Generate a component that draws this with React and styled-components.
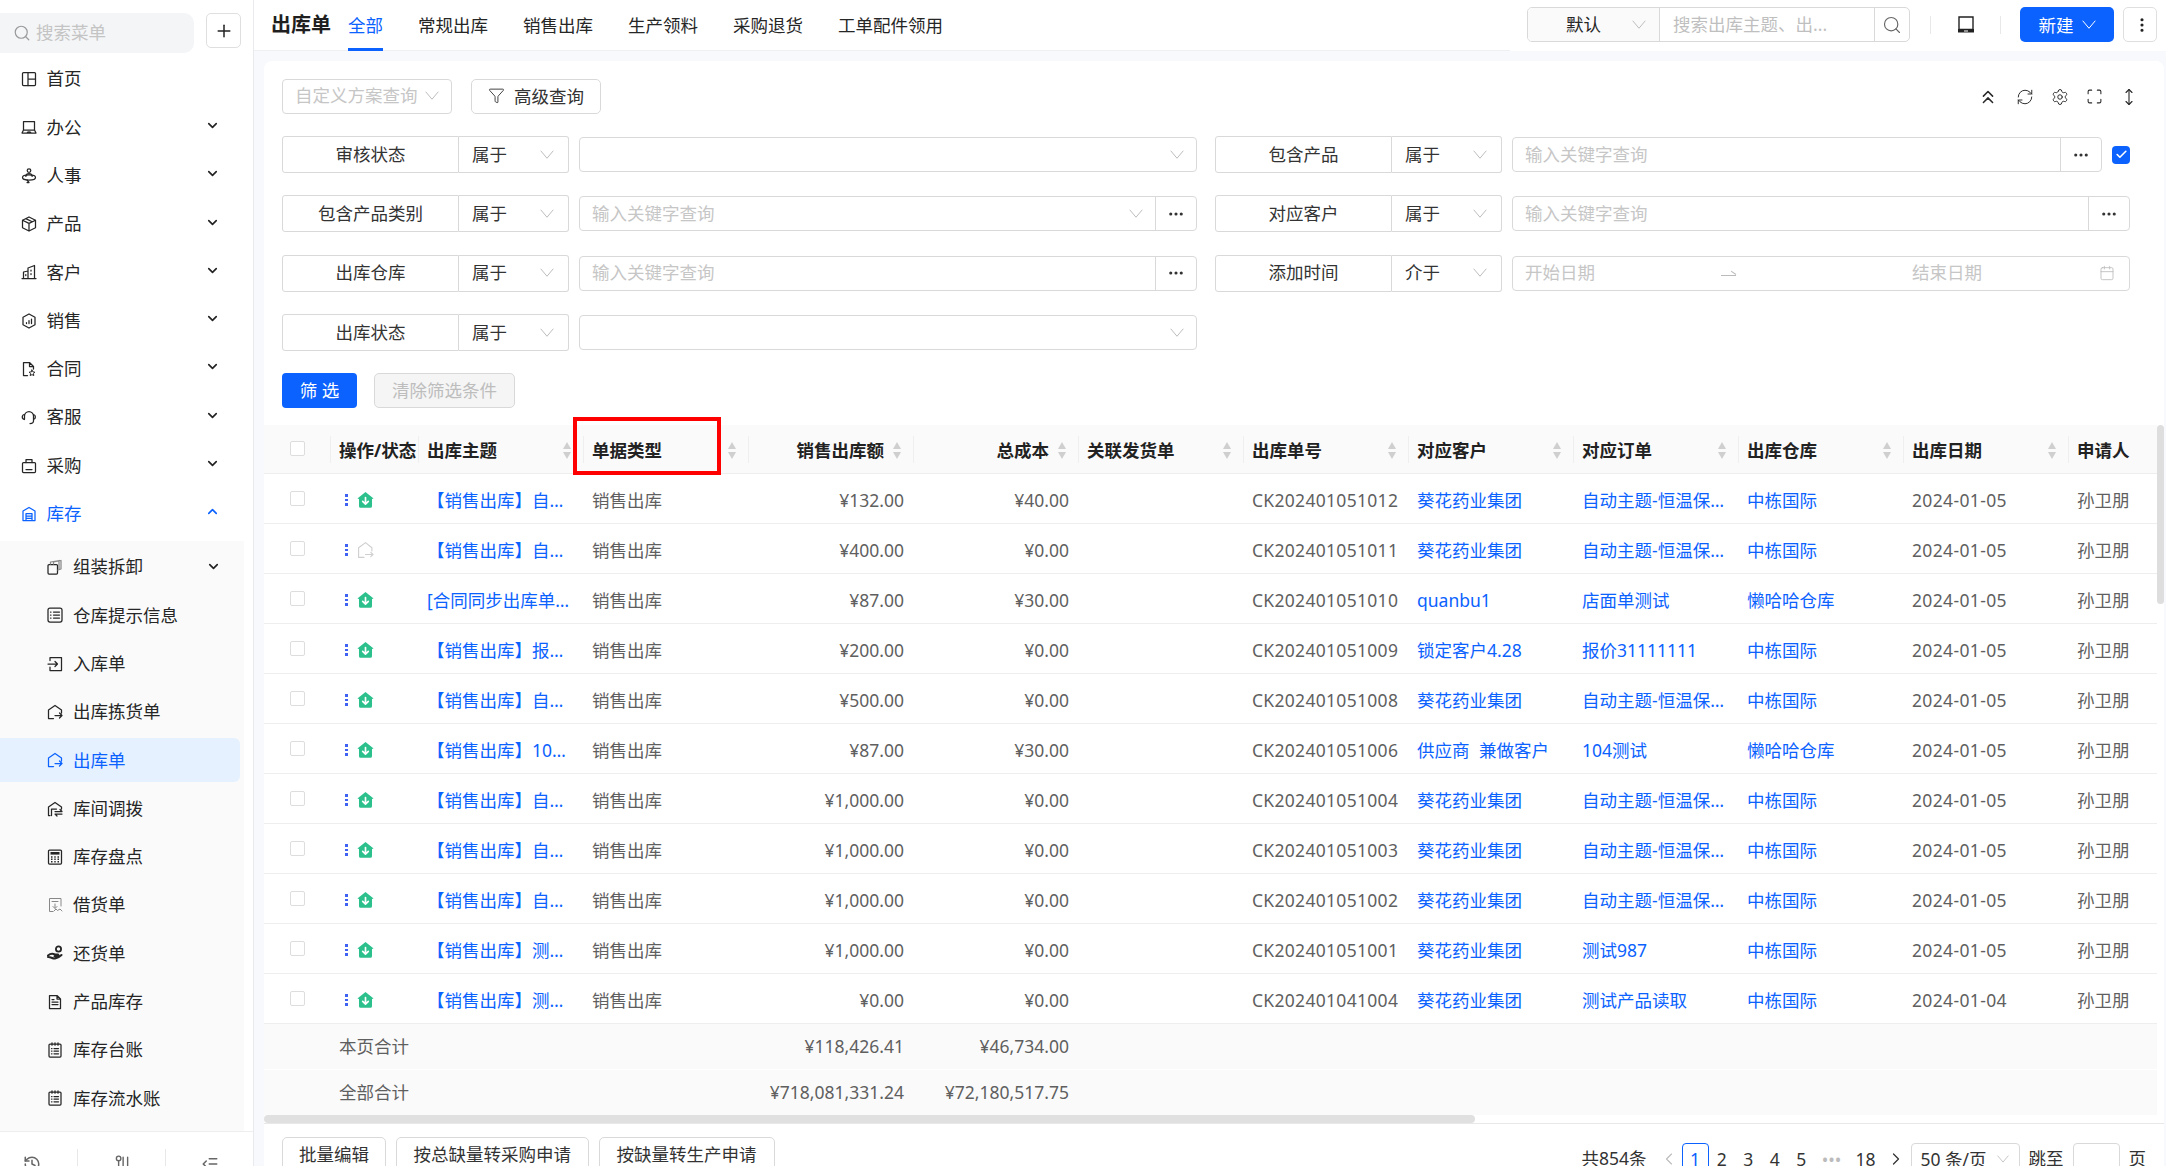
import React from 'react';
import styled, { createGlobalStyle } from 'styled-components';
import { ChevronDown, ChevronUp, Plus, Search, Funnel, ChevronsUp, RefreshCw, Settings, Maximize, MoveVertical, Ellipsis, EllipsisVertical, Check, Calendar, ChevronLeft, ChevronRight, History, IndentDecrease } from 'lucide-react';

const BLUE = '#0b62ff';
const GlobalStyle = createGlobalStyle`
  html, body { margin: 0; padding: 0; height: 100%; background: #fff; }
  body { font-family: "Noto Sans", "Noto Sans CJK SC", sans-serif; font-size: 17.5px; color: #262626; overflow: hidden; }
  * { box-sizing: border-box; }
`;

const Page = styled.div`display: flex; width: 2166px; height: 1166px; overflow: hidden;`;
const Sidebar = styled.aside`width: 254px; flex: none; height: 100%; display: flex; flex-direction: column; background: #fff; border-right: 1px solid #e8eaee;`;
const SearchRow = styled.div`display: flex; height: 55px; padding-top: 13px; flex: none;`;
const MenuSearch = styled.div`width: 194px; height: 40px; background: #f4f5f7; border-radius: 0 10px 10px 0; display: flex; align-items: center; gap: 5px; padding-left: 13px; color: #c4c4c4; line-height: 1;`;
const AddButton = styled.button`width: 35px; height: 35px; margin-left: 12px; padding: 0; background: #fff; border: 1px solid #dfdfdf; border-radius: 5px; display: flex; align-items: center; justify-content: center; color: #222;`;
const Menu = styled.nav`flex: 1; overflow: hidden;`;
const MenuItem = styled.div`height: 48.3px; display: flex; align-items: center; padding: 0 33px 0 21px; gap: 9.5px; line-height: 1; color: ${p => p.$active ? BLUE : '#262626'}; svg.arrow { margin-left: auto; margin-top: -4px; color: ${p => p.$active ? BLUE : '#222'}; }`;
const SubMenu = styled.div`width: 244px; margin-top: 3px; padding: 2px 0 9px; background: #fafafa;`;
const SubItem = styled.div`height: ${p => p.$active ? '44px' : '48.3px'}; margin: ${p => p.$active ? '2.15px 4px 2.15px 0' : '0'}; display: flex; align-items: center; padding: 0 23px 0 47px; gap: 10px; line-height: 1; border-radius: ${p => p.$active ? '0 6px 6px 0' : '0'}; background: ${p => p.$active ? '#e5f1ff' : 'transparent'}; color: ${p => p.$active ? BLUE : '#262626'}; svg.arrow { margin-left: auto; color: #222; margin-top: -2px; }`;
const SideFoot = styled.div`flex: none; height: 35px; border-top: 1px solid #eee; display: grid; grid-template-columns: 77px 88px 1fr; padding-top: 17px; color: #666; overflow: hidden;`;
const SideFootCell = styled.div`display: flex; justify-content: center; height: 40px; border-left: ${p => p.$line ? '1px solid #e8e8e8' : 'none'}; padding: 6px ${p => p.$shift || 0}px 0 0;`;

const Main = styled.main`flex: 1; min-width: 0; height: 100%; display: flex; flex-direction: column; background: #f7f9fc; overflow: hidden;`;
const TopBar = styled.header`flex: none; height: 51px; display: flex; background: #fff;`;
const TabsArea = styled.div`flex: 1; display: flex; align-items: flex-start; padding-left: 17px; border-bottom: 1px solid #eef0f3; background: #fff; height: 51px;`;
const Title = styled.h1`margin: 0 17px 0 0; font-size: 20px; font-weight: 700; color: #1f1f1f; line-height: 50px; width: 60px; white-space: nowrap;`;
const Tabs = styled.div`display: flex; gap: 35px;`;
const Tab = styled.div`height: 51px; line-height: 50px; white-space: nowrap; color: ${p => p.$active ? BLUE : '#262626'}; border-bottom: ${p => p.$active ? `3px solid ${BLUE}` : 'none'};`;
const Tools = styled.div`flex: none; display: flex; align-items: flex-start; margin-left: 17px; padding: 7px 9px 0 0; height: 51px; background: #fff;`;
const SearchGroup = styled.div`display: flex; width: 383px; height: 35px; border: 1px solid #d9d9d9; border-radius: 5px; overflow: hidden; line-height: 33px;`;
const GroupSelect = styled.div`width: 132px; flex: none; background: #fafafa; border-right: 1px solid #d9d9d9; display: flex; align-items: center; padding: 0 13px 0 38px; justify-content: space-between; color: #262626;`;
const GroupPlaceholder = styled.div`flex: 1; padding-left: 13px; color: #bfbfbf; white-space: nowrap; overflow: hidden; text-overflow: ellipsis;`;
const GroupButton = styled.div`width: 35px; flex: none; border-left: 1px solid #d9d9d9; display: flex; align-items: center; justify-content: center; color: #666;`;
const ToolDivider = styled.div`width: 1px; height: 18px; margin-top: 9px; background: #e8e8e8; margin-left: ${p => p.$ml || 0}px;`;
const IconSlot = styled.div`width: 69px; height: 35px; display: flex; align-items: center; justify-content: center; color: #222;`;
const NewButton = styled.button`width: 94px; height: 35px; margin-left: 19px; background: ${BLUE}; color: #fff; border: 0; border-radius: 5px; font: inherit; display: flex; align-items: center; justify-content: center; gap: 8px; padding: 0;`;
const MoreButton = styled.button`width: 34px; height: 35px; margin-left: 9px; background: #fff; border: 1px solid #dfdfdf; border-radius: 5px; display: flex; align-items: center; justify-content: center; padding: 0 0 0 4px; color: #222;`;

const Card = styled.section`flex: 1; margin: 10px 2px 0 10px; background: #fff; border-radius: 8px 8px 0 0; padding-top: 18px; overflow: hidden; display: flex; flex-direction: column;`;
const QueryBar = styled.div`display: flex; align-items: center; height: 35px; padding: 0 26px 0 18px; gap: 19px; flex: none;`;
const SchemeSelect = styled.div`width: 170px; height: 35px; border: 1px solid #d9d9d9; border-radius: 4px; display: flex; align-items: center; justify-content: space-between; padding: 0 12px 2px 12px; color: #c6c6c6; line-height: 1; white-space: nowrap;`;
const OutlineButton = styled.button`height: 35px; padding: 0 ${p => p.$pad || 16}px 2px; background: #fff; border: 1px solid #d9d9d9; border-radius: 5px; font: inherit; color: #333; display: flex; align-items: center; gap: 9px; white-space: nowrap; flex: none;`;
const CardIcons = styled.div`margin-left: auto; display: flex; align-items: center; gap: 17px; color: #2a2a2a;`;
const FilterGrid = styled.div`display: grid; grid-template-columns: 915px 915px; column-gap: 18px; row-gap: 22.25px; padding: 22px 34px 0 18px; grid-auto-rows: 37px; flex: none;`;
const FilterRow = styled.div`display: flex; align-items: center; height: 37px;`;
const FilterLabel = styled.div`width: 177px; height: 37px; flex: none; border: 1px solid #d9d9d9; border-radius: 3px 0 0 3px; display: flex; align-items: center; justify-content: center; color: #333; line-height: 1;`;
const OpSelect = styled.div`width: 110px; height: 37px; flex: none; border: 1px solid #d9d9d9; border-left: 0; border-radius: 0 3px 3px 0; display: flex; align-items: center; justify-content: space-between; padding: 0 14px 0 13px; color: #333; line-height: 1;`;
const ValueBox = styled.div`flex: 1; min-width: 0; height: 35px; margin-left: 10px; border: 1px solid #d9d9d9; border-radius: 4px; display: flex; align-items: center; color: #c6c6c6; line-height: 1; overflow: hidden;`;
const ValueText = styled.div`flex: 1; padding: 0 12px; white-space: nowrap; display: flex; align-items: center; justify-content: space-between;`;
const DotsCell = styled.div`width: 41px; height: 100%; flex: none; border-left: 1px solid #d9d9d9; display: flex; align-items: center; justify-content: center; color: #333;`;
const Tick = styled.div`width: 18px; height: 18px; flex: none; margin-left: 10px; border-radius: 4px; background: ${BLUE}; color: #fff; display: flex; align-items: center; justify-content: center;`;
const DateStart = styled.div`width: 208px; padding-left: 12px;`;
const DateArrow = styled.div`width: 15px; height: 6px; border-bottom: 1px solid #bbb; position: relative; &::after { content: ''; position: absolute; right: 0; bottom: 0; width: 6px; border-top: 1px solid #bbb; transform: rotate(35deg); transform-origin: right; }`;
const DateEnd = styled.div`flex: 1; padding: 0 14px 0 176px; display: flex; justify-content: space-between; align-items: center;`;
const FilterActions = styled.div`display: flex; gap: 17px; padding: 22px 0 0 18px; flex: none;`;
const PrimaryButton = styled.button`width: 75px; height: 35px; background: ${BLUE}; border: 0; border-radius: 4px; color: #fff; font: inherit; padding: 0 0 2px;`;
const DisabledButton = styled.button`width: 141px; height: 35px; background: #f5f5f5; border: 1px solid #d9d9d9; border-radius: 5px; color: #bdbdbd; font: inherit; padding: 0 0 2px;`;

const TableArea = styled.div`display: flex; margin-top: 17px; flex: none;`;
const Table = styled.div`width: 1893px; flex: none;`;
const VScroll = styled.div`width: 7px; flex: none;`;
const VThumb = styled.div`height: 179px; background: #dedede; border-radius: 4px;`;
const GRID = '66px 88px repeat(10, 165px) 89px';
const HeadRow = styled.div`display: grid; grid-template-columns: ${GRID}; height: 49px; background: #fafafa; border-bottom: 1px solid #eee;`;
const HeadCell = styled.div`position: relative; display: flex; align-items: center; justify-content: ${p => p.$right ? 'flex-end' : 'flex-start'}; padding: 4px ${p => p.$right ? '29px' : '9px'} 0 9px; font-weight: 700; color: #222; white-space: nowrap; line-height: 1; &::before { content: ''; display: ${p => p.$noline ? 'none' : 'block'}; position: absolute; left: 0; top: 11px; height: 27px; width: 1px; background: #efefef; }`;
const Sorter = styled.span`position: absolute; right: 12px; top: 17px; display: flex; flex-direction: column; gap: 3px; &::before, &::after { content: ''; width: 0; height: 0; border-left: 4px solid transparent; border-right: 4px solid transparent; } &::before { border-bottom: 7px solid #cfcfcf; } &::after { border-top: 7px solid #cfcfcf; }`;
const Highlight = styled.div`position: absolute; left: -10px; top: -8px; width: 148px; height: 58px; border: 4px solid #f00; pointer-events: none;`;
const Row = styled.div`display: grid; grid-template-columns: ${GRID}; height: 50px; border-bottom: 1px solid #eee; background: #fff;`;
const Cell = styled.div`display: flex; align-items: center; justify-content: ${p => p.$right ? 'flex-end' : 'flex-start'}; padding: 5px 9px 0 9px; min-width: 0; color: ${p => p.$link ? BLUE : '#5f5f5f'}; line-height: 1.3; letter-spacing: ${p => p.$ls || 0}px;`;
const Clip = styled.span`display: block; white-space: nowrap; overflow: hidden; text-overflow: ellipsis; min-width: 0; word-spacing: 5px;`;
const CheckCell = styled.div`display: flex; align-items: center; padding-left: 26px;`;
const Box = styled.span`display: block; width: 15px; height: 15px; border: 1px solid #ddd; border-radius: 2px; background: #fff;`;
const StatusCell = styled.div`display: flex; align-items: center; padding: 3px 0 0 15px; gap: 9px;`;
const ActionDots = styled.span`display: flex; flex-direction: column; gap: 2px; span { display: block; width: 2.5px; height: 2.5px; background: #3f62f2; }`;
const SumRow = styled.div`display: grid; grid-template-columns: ${GRID}; height: 45px; background: #fafafa; margin-bottom: ${p => p.$gap ? '1px' : '0'};`;
const SumText = styled.div`display: flex; align-items: center; justify-content: ${p => p.$right ? 'flex-end' : 'flex-start'}; padding: 0 9px; color: #5f5f5f; white-space: nowrap; grid-column: ${p => p.$col}; line-height: 1;`;
const HScroll = styled.div`height: 9px; width: 1900px; border-bottom: 1px solid #e8e8e8; flex: none;`;
const HThumb = styled.div`width: 1211px; height: 8px; background: #e0e0e0; border-radius: 4px;`;
const Footer = styled.div`flex: none; display: flex; justify-content: space-between; padding: 13px 9px 0 18px;`;
const BatchGroup = styled.div`display: flex; gap: 10px;`;
const Pager = styled.div`display: flex; align-items: flex-start; padding-top: 6px; line-height: 30px; height: 40px; color: #333;`;
const PagerTotal = styled.span`margin-right: 9px; white-space: nowrap;`;
const PageItem = styled.span`width: ${p => p.$w || 26.5}px; height: 32px; flex: none; display: flex; align-items: center; justify-content: center; color: ${p => p.$active ? BLUE : p.$muted ? '#bbb' : '#333'}; border: ${p => p.$active ? `1px solid ${BLUE}` : '0'}; border-radius: 4px; background: #fff;`;
const SizeSelect = styled.div`width: 109px; height: 32px; margin-left: 2px; border: 1px solid #d9d9d9; border-radius: 4px; display: flex; align-items: center; justify-content: space-between; padding: 0 10px 0 9px; white-space: nowrap;`;
const JumpLabel = styled.span`margin: 0 9px; white-space: nowrap;`;
const JumpInput = styled.div`width: 47px; height: 32px; border: 1px solid #d9d9d9; border-radius: 4px; flex: none;`;

const Ico = ({ children, size = 16, color }) => (
  <svg width={size} height={size} viewBox="0 0 16 16" fill="none" stroke={color || 'currentColor'} strokeWidth="1.25" strokeLinecap="round" strokeLinejoin="round" style={{ flex: 'none' }}>{children}</svg>
);
const icons = {
  home: <Ico><rect x="1.5" y="1.5" width="13" height="13" rx="1" /><path d="M7 1.5v13M7 8h7.5" /></Ico>,
  office: <Ico><path d="M2.5 11V2.5h11V11M2.5 11h11M2.5 11 1 14h14l-1.5-3M6 14c0-1.5 4-1.5 4 0" /></Ico>,
  person: <Ico><circle cx="8" cy="2.6" r="1.8" /><ellipse cx="8" cy="9.5" rx="6.5" ry="2.6" /><path d="M4.8 8.4C5 6.2 6 5.6 8 5.6s3 .6 3.2 2.8M6 12l2 2.5M6 14.5h2" /></Ico>,
  box: <Ico><path d="M8 1 14.5 4.2v7.6L8 15 1.5 11.8V4.2zM1.5 4.2 8 7.4l6.5-3.2M8 7.4V15M4.8 2.6l6.4 3.2" /></Ico>,
  customer: <Ico><path d="M1 14.5h14M7 14.5V4l6.5-2.5v13M2.5 14.5V8L7 7M10 6v1M10 9.5v1M4.8 10.5v1" /></Ico>,
  sales: <Ico><path d="M8 1 14 4.2v7.6L8 15 2 11.8V4.2z" /><path d="M5.5 10.5V9.5M8 10.5V7.5M10.5 10.5V6" /></Ico>,
  contract: <Ico><path d="M6.5 14.5H2.5v-13h6l4 4V8M8.5 1.5v4h4" /><path d="m11 9 .9 1.9 2 .3-1.45 1.4.35 2-1.8-1-1.8 1 .35-2L8.1 11.2l2-.3z" strokeWidth="1" /></Ico>,
  service: <Ico><path d="M3.5 10V7a4.5 4.5 0 0 1 9 0v5c0 1.5-1.5 2.5-3.5 2.5M3.5 5.5c-3 .5-3 4.5 0 5M12.5 5.5c2.5.5 2.5 4.5 0 5" /></Ico>,
  bag: <Ico><rect x="1.5" y="4.5" width="13" height="10" rx="1" /><path d="M5 4.5V1.5h6v3M5 11.5h6" /></Ico>,
  stock: <Ico><path d="M2 5 8 1.5 14 5v9.5H2zM5 14.5V7.5h6v7M5 10h6M5 12.3h6" /></Ico>,
  layers: <Ico><rect x="1" y="5.5" width="9.5" height="9.5" rx="1" /><path d="M3.5 5V3l9-1.5M6.5 5V3l7.5-1.5V10l-3 1M12 2v8.5" stroke="#8a8a8a" /></Ico>,
  list: <Ico><rect x="1" y="1" width="14" height="14" rx="2" /><path d="M6.5 5h6M6.5 8h6M6.5 11h6M3.5 5h.5M3.5 8h.5M3.5 11h.5" /></Ico>,
  inbox: <Ico><path d="M3 4.5V1.5h11.5v13H3V11" /><path d="M1 8h9.5M8 5.5 10.5 8 8 10.5" /></Ico>,
  outbox: <Ico><path d="M6.5 14.5H1.5V6L8 1.5 14.5 6v3M8 11.5h7M12.5 9l2.5 2.5-2.5 2.5" /></Ico>,
  transfer: <Ico><path d="M3 14.5H1.5V6L8 1.5 14.5 6v2M4.5 14.5V8h5M8 10.5h7l-2-2M15 13H8l2 2" /></Ico>,
  calc: <Ico><rect x="1.5" y="1" width="13" height="14" rx="1" /><rect x="3.5" y="3" width="9" height="2.6" fill="currentColor" stroke="none" /><path d="M4 8h1.5M7.3 8h1.4M10.5 8H12M4 10.3h1.5M7.3 10.3h1.4M10.5 10.3H12M4 12.8h1.5M7.3 12.8h1.4M10.5 12.8H12" strokeWidth="1.6" strokeLinecap="butt" /></Ico>,
  borrow: <Ico color="#888"><path d="M14 9V1.5H2.5v13H6M5 4.5h6M8 7v4M6 9.5l2 2 2-2M7 14l2-2 1.5 1.5L13 12l2 2" strokeWidth="1" /></Ico>,
  hand: <Ico><circle cx="11.5" cy="4" r="2.6" fill="none" strokeWidth="1.8" /><path d="M1 10.5c3-2.5 5-2 7-1h3c1 1 0 1.8-1 1.8H7.5M1 12c2-.5 5 2 7 1.5s5-2 6.5-3.5" strokeWidth="2" /></Ico>,
  doc: <Ico><path d="M10 1.5H2.5v13h11V5zM10 1.5V5h3.5M5 8h6M5 10.5h6M5 5.5h2" /></Ico>,
  ledger: <Ico><rect x="2" y="2" width="12" height="13" rx="1" /><path d="M5 .8v2.4M8 .8v2.4M11 .8v2.4M7 6.5h4.5M7 9h4.5M7 11.8h4.5M4.5 6.5h.5M4.5 9h.5M4.5 11.8h.5" /></Ico>,
};

const Arrow = ({ size = 15 }) => <ChevronDown className="arrow" size={size} strokeWidth={2.6} />;
const Caret = ({ color = '#bdbdbd', width = 14 }) => (
  <svg width={width} height={width * 0.65} viewBox="0 0 14 9" fill="none" stroke={color} strokeWidth="1" style={{ flex: 'none' }}><path d="M.7.7 7 8.2 13.3.7" /></svg>
);

const mainMenu = [
  ['home', '首页', false], ['office', '办公', true], ['person', '人事', true], ['box', '产品', true], ['customer', '客户', true],
  ['sales', '销售', true], ['contract', '合同', true], ['service', '客服', true], ['bag', '采购', true],
];
const subMenu = [
  ['layers', '组装拆卸', true], ['list', '仓库提示信息'], ['inbox', '入库单'], ['outbox', '出库拣货单'], ['outbox', '出库单', false, true],
  ['transfer', '库间调拨'], ['calc', '库存盘点'], ['borrow', '借货单'], ['hand', '还货单'], ['doc', '产品库存'], ['ledger', '库存台账'], ['ledger', '库存流水账'],
];

const FULL = '葵花药业集团';
const AUTO = '自动主题-恒温保温杯订单';
const ZD = '中栋国际';
const LH = '懒哈哈仓库';
const rows = [
  ['【销售出库】自动主题出库', '¥132.00', '¥40.00', 'CK202401051012', FULL, AUTO, ZD, '2024-01-05', true],
  ['【销售出库】自动主题出库', '¥400.00', '¥0.00', 'CK202401051011', FULL, AUTO, ZD, '2024-01-05', false],
  ['[合同同步出库单]店面单测试', '¥87.00', '¥30.00', 'CK202401051010', 'quanbu1', '店面单测试', LH, '2024-01-05', true],
  ['【销售出库】报价31111111', '¥200.00', '¥0.00', 'CK202401051009', '锁定客户4.28', '报价31111111', ZD, '2024-01-05', true],
  ['【销售出库】自动主题出库', '¥500.00', '¥0.00', 'CK202401051008', FULL, AUTO, ZD, '2024-01-05', true],
  ['【销售出库】104测试出库', '¥87.00', '¥30.00', 'CK202401051006', '供应商 兼做客户', '104测试', LH, '2024-01-05', true],
  ['【销售出库】自动主题出库', '¥1,000.00', '¥0.00', 'CK202401051004', FULL, AUTO, ZD, '2024-01-05', true],
  ['【销售出库】自动主题出库', '¥1,000.00', '¥0.00', 'CK202401051003', FULL, AUTO, ZD, '2024-01-05', true],
  ['【销售出库】自动主题出库', '¥1,000.00', '¥0.00', 'CK202401051002', FULL, AUTO, ZD, '2024-01-05', true],
  ['【销售出库】测试987出库', '¥1,000.00', '¥0.00', 'CK202401051001', FULL, '测试987', ZD, '2024-01-05', true],
  ['【销售出库】测试产品读取', '¥0.00', '¥0.00', 'CK202401041004', FULL, '测试产品读取', ZD, '2024-01-04', true],
];

const StatusIcon = ({ done }) => done ? (
  <svg width="17" height="16" viewBox="0 0 17 16"><path d="M8.5 0 16.6 6.4 15 7v7.2a1.6 1.6 0 0 1-1.6 1.6H3.6A1.6 1.6 0 0 1 2 14.2V7L.4 6.4z" fill="#2cc08c" /><path d="M8.5 5.5v6.5M5.7 9.4l2.8 2.8 2.8-2.8" fill="none" stroke="#fff" strokeWidth="1.7" strokeLinecap="round" strokeLinejoin="round" /></svg>
) : (
  <svg width="17" height="16" viewBox="0 0 17 16" fill="none" stroke="#cfcfcf" strokeWidth="1.1" strokeLinejoin="round" strokeLinecap="round"><path d="M7 15.4H1.6V5.8L8.5.6l6.4 5.2V9M8.5 12.5h7.5M13.8 10.3l2.2 2.2-2.2 2.2" /></svg>
);

const Op = ({ text = '属于' }) => <OpSelect>{text}<Caret /></OpSelect>;
const Dots = () => <DotsCell><Ellipsis size={18} strokeWidth={2.2} /></DotsCell>;
const Ph = '输入关键字查询';

export default function App() {
  return (
    <Page>
      <GlobalStyle />
      <Sidebar>
        <SearchRow>
          <MenuSearch><Search size={18} strokeWidth={1.6} color="#9a9a9a" />搜索菜单</MenuSearch>
          <AddButton><Plus size={20} strokeWidth={1.8} /></AddButton>
        </SearchRow>
        <Menu>
          {mainMenu.map(([ic, label, arrow]) => (
            <MenuItem key={label}>{icons[ic]}{label}{arrow && <Arrow />}</MenuItem>
          ))}
          <MenuItem $active>{icons.stock}库存<ChevronUp className="arrow" size={15} strokeWidth={2.6} /></MenuItem>
          <SubMenu>
            {subMenu.map(([ic, label, arrow, active]) => (
              <SubItem key={label} $active={active}>{icons[ic]}{label}{arrow && <Arrow />}</SubItem>
            ))}
          </SubMenu>
        </Menu>
        <SideFoot>
          <SideFootCell $shift={13}><History size={18} /></SideFootCell>
          <SideFootCell $line><Ico size={18}><circle cx="5" cy="3" r="2" /><path d="M5 5v9M9 2v12M13 2v12" /></Ico></SideFootCell>
          <SideFootCell $line><IndentDecrease size={18} /></SideFootCell>
        </SideFoot>
      </Sidebar>
      <Main>
        <TopBar>
          <TabsArea>
            <Title>出库单</Title>
            <Tabs>
              <Tab $active>全部</Tab>
              <Tab>常规出库</Tab><Tab>销售出库</Tab><Tab>生产领料</Tab><Tab>采购退货</Tab><Tab>工单配件领用</Tab>
            </Tabs>
          </TabsArea>
          <Tools>
            <SearchGroup>
              <GroupSelect>默认<Caret /></GroupSelect>
              <GroupPlaceholder>搜索出库主题、出...</GroupPlaceholder>
              <GroupButton><Search size={20} strokeWidth={1.4} /></GroupButton>
            </SearchGroup>
            <ToolDivider $ml={20} />
            <IconSlot>
              <svg width="20" height="18" viewBox="0 0 20 18" fill="none" stroke="currentColor" strokeWidth="1.4"><path d="M3 1h14v12.5H3z" /><path d="M2 13h16v3.5H2z" fill="currentColor" stroke="none" /><path d="M8 15h4" stroke="#fff" strokeWidth="1" /></svg>
            </IconSlot>
            <ToolDivider />
            <NewButton>新建<Caret color="#fff" /></NewButton>
            <MoreButton><EllipsisVertical size={18} strokeWidth={2.2} /></MoreButton>
          </Tools>
        </TopBar>
        <Card>
          <QueryBar>
            <SchemeSelect>自定义方案查询<Caret /></SchemeSelect>
            <OutlineButton $pad={16}><Funnel size={17} strokeWidth={1.3} />高级查询</OutlineButton>
            <CardIcons>
              <ChevronsUp size={22} strokeWidth={1.7} />
              <RefreshCw size={18} strokeWidth={1.3} />
              <Settings size={18} strokeWidth={1.3} />
              <Maximize size={17} strokeWidth={1.5} />
              <MoveVertical size={18} strokeWidth={1.5} />
            </CardIcons>
          </QueryBar>
          <FilterGrid>
            <FilterRow><FilterLabel>审核状态</FilterLabel><Op /><ValueBox><ValueText>&nbsp;<Caret /></ValueText></ValueBox></FilterRow>
            <FilterRow><FilterLabel>包含产品</FilterLabel><Op /><ValueBox><ValueText>{Ph}</ValueText><Dots /></ValueBox><Tick><Check size={13} strokeWidth={3} /></Tick></FilterRow>
            <FilterRow><FilterLabel>包含产品类别</FilterLabel><Op /><ValueBox><ValueText>{Ph}<Caret /></ValueText><Dots /></ValueBox></FilterRow>
            <FilterRow><FilterLabel>对应客户</FilterLabel><Op /><ValueBox><ValueText>{Ph}</ValueText><Dots /></ValueBox></FilterRow>
            <FilterRow><FilterLabel>出库仓库</FilterLabel><Op /><ValueBox><ValueText>{Ph}</ValueText><Dots /></ValueBox></FilterRow>
            <FilterRow><FilterLabel>添加时间</FilterLabel><Op text="介于" /><ValueBox><DateStart>开始日期</DateStart><DateArrow /><DateEnd>结束日期<Calendar size={16} strokeWidth={1.3} color="#bdbdbd" /></DateEnd></ValueBox></FilterRow>
            <FilterRow><FilterLabel>出库状态</FilterLabel><Op /><ValueBox><ValueText>&nbsp;<Caret /></ValueText></ValueBox></FilterRow>
          </FilterGrid>
          <FilterActions>
            <PrimaryButton>筛 选</PrimaryButton>
            <DisabledButton>清除筛选条件</DisabledButton>
          </FilterActions>
          <TableArea>
            <Table>
              <HeadRow>
                <CheckCell><Box /></CheckCell>
                <HeadCell>操作/状态</HeadCell>
                <HeadCell>出库主题<Sorter /></HeadCell>
                <HeadCell>单据类型<Sorter /><Highlight /></HeadCell>
                <HeadCell $right>销售出库额<Sorter /></HeadCell>
                <HeadCell $right>总成本<Sorter /></HeadCell>
                <HeadCell>关联发货单<Sorter /></HeadCell>
                <HeadCell>出库单号<Sorter /></HeadCell>
                <HeadCell>对应客户<Sorter /></HeadCell>
                <HeadCell>对应订单<Sorter /></HeadCell>
                <HeadCell>出库仓库<Sorter /></HeadCell>
                <HeadCell>出库日期<Sorter /></HeadCell>
                <HeadCell>申请人</HeadCell>
              </HeadRow>
              {rows.map((r, i) => (
                <Row key={i}>
                  <CheckCell><Box /></CheckCell>
                  <StatusCell><ActionDots><span /><span /><span /></ActionDots><StatusIcon done={r[8]} /></StatusCell>
                  <Cell $link><Clip>{r[0]}</Clip></Cell>
                  <Cell><Clip>销售出库</Clip></Cell>
                  <Cell $right>{r[1]}</Cell>
                  <Cell $right>{r[2]}</Cell>
                  <Cell />
                  <Cell $ls={0.3}><Clip>{r[3]}</Clip></Cell>
                  <Cell $link><Clip>{r[4]}</Clip></Cell>
                  <Cell $link><Clip>{r[5]}</Clip></Cell>
                  <Cell $link><Clip>{r[6]}</Clip></Cell>
                  <Cell $ls={0.35}>{r[7]}</Cell>
                  <Cell><Clip>孙卫朋</Clip></Cell>
                </Row>
              ))}
              <SumRow $gap>
                <SumText $col="2 / 3">本页合计</SumText>
                <SumText $col="5" $right>¥118,426.41</SumText>
                <SumText $col="6" $right>¥46,734.00</SumText>
              </SumRow>
              <SumRow>
                <SumText $col="2 / 3">全部合计</SumText>
                <SumText $col="5" $right>¥718,081,331.24</SumText>
                <SumText $col="6" $right>¥72,180,517.75</SumText>
              </SumRow>
            </Table>
            <VScroll><VThumb /></VScroll>
          </TableArea>
          <HScroll><HThumb /></HScroll>
          <Footer>
            <BatchGroup>
              <OutlineButton>批量编辑</OutlineButton>
              <OutlineButton $pad={16.5}>按总缺量转采购申请</OutlineButton>
              <OutlineButton $pad={17}>按缺量转生产申请</OutlineButton>
            </BatchGroup>
            <Pager>
              <PagerTotal>共854条</PagerTotal>
              <PageItem $w={26} $muted><ChevronLeft size={20} strokeWidth={1.3} /></PageItem>
              <PageItem $active $w={27}>1</PageItem>
              <PageItem>2</PageItem><PageItem>3</PageItem><PageItem>4</PageItem><PageItem>5</PageItem>
              <PageItem $w={34} $muted>•••</PageItem>
              <PageItem $w={34}>18</PageItem>
              <PageItem $w={26}><ChevronRight size={20} strokeWidth={1.5} /></PageItem>
              <SizeSelect>50 条/页<Caret width={12} /></SizeSelect>
              <JumpLabel>跳至</JumpLabel>
              <JumpInput />
              <JumpLabel>页</JumpLabel>
            </Pager>
          </Footer>
        </Card>
      </Main>
    </Page>
  );
}
